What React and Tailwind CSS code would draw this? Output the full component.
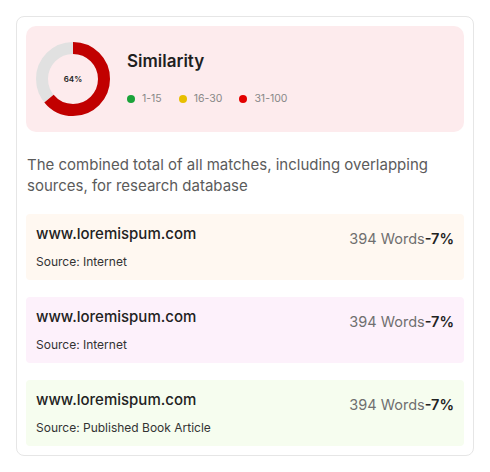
import React from 'react';

const sources = [
  { url: 'www.loremispum.com', source: 'Internet', words: 394, pct: '-7%', bg: 'bg-[#fff8f1]' },
  { url: 'www.loremispum.com', source: 'Internet', words: 394, pct: '-7%', bg: 'bg-[#fdf1fb]' },
  { url: 'www.loremispum.com', source: 'Published Book Article', words: 394, pct: '-7%', bg: 'bg-[#f6fdef]' },
];

const legend = [
  { label: '1-15', color: 'bg-[#1aa33a]' },
  { label: '16-30', color: 'bg-[#e8bf00]' },
  { label: '31-100', color: 'bg-[#e30000]' },
];

const Donut = ({ value }) => {
  const r = 31;
  const c = 2 * Math.PI * r;
  return (
    <div className="relative w-[74px] h-[74px] shrink-0">
      <svg width="74" height="74" viewBox="0 0 74 74">
        <circle cx="37" cy="37" r={r} fill="none" stroke="#e1e1e1" strokeWidth="12" />
        <circle
          cx="37"
          cy="37"
          r={r}
          fill="none"
          stroke="#c10000"
          strokeWidth="12"
          strokeDasharray={`${(c * value) / 100} ${c}`}
          transform="rotate(-90 37 37)"
        />
      </svg>
      <span className="absolute inset-0 flex items-center justify-center text-[8px] font-semibold text-[#222]">
        {value}%
      </span>
    </div>
  );
};

export default function App() {
  return (
    <div className="p-4 bg-white min-h-screen" style={{ fontFamily: 'Inter, "Noto Sans", sans-serif' }}>
      <div className="border border-[#e6e6e6] rounded-lg p-[9px]">
        <div className="bg-[#fdebed] rounded-[10px] flex items-center gap-[17px] pl-[10px] h-[106px]">
          <Donut value={64} />
          <div className="-mt-[2px]">
            <h2 className="text-[17px] font-semibold text-[#1f1f1f] leading-6">Similarity</h2>
            <div className="flex items-center gap-[17px] mt-[18px]">
              {legend.map((l) => (
                <div key={l.label} className="flex items-center gap-[7px]">
                  <span className={`w-2 h-2 rounded-full ${l.color}`} />
                  <span className="text-[10.5px] text-[#888]">{l.label}</span>
                </div>
              ))}
            </div>
          </div>
        </div>

        <p className="mt-[22px] text-[15px] leading-[21px] text-[#5b5b5b] pl-px pr-6">
          The combined total of all matches, including overlapping sources, for research database
        </p>

        <div className="mt-[18px] flex flex-col gap-[17px]">
          {sources.map((s, i) => (
            <div key={i} className={`${s.bg} rounded-sm flex justify-between h-[66px] pl-[10px] pr-[10px] pt-[10px]`}>
              <div>
                <div className="text-[15px] font-medium text-[#222] leading-5">{s.url}</div>
                <div className="text-[12px] text-[#333] leading-4 mt-[10px]">Source: {s.source}</div>
              </div>
              <div className="text-[14.5px] leading-5 mt-[5px]">
                <span className="text-[#6f6f6f]">{s.words} Words</span>
                <span className="font-semibold text-[#222]">{s.pct}</span>
              </div>
            </div>
          ))}
        </div>
      </div>
    </div>
  );
}
